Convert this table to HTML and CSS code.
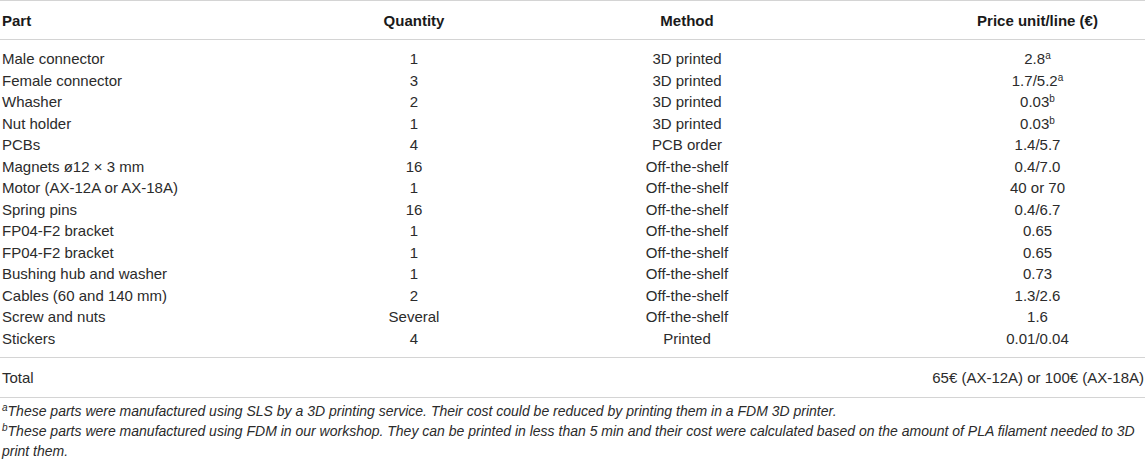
FILE: index.html
```html
<!DOCTYPE html>
<html>
<head>
<meta charset="utf-8">
<link rel="stylesheet" href="styles.css">
</head>
<body>
<table class="parts">
  <colgroup>
    <col class="c-part">
    <col class="c-qty">
    <col class="c-method">
    <col class="c-price">
  </colgroup>
  <thead>
    <tr>
      <th class="left">Part</th>
      <th>Quantity</th>
      <th>Method</th>
      <th class="price">Price unit/line (€)</th>
    </tr>
  </thead>
  <tbody class="items">
    <tr class="first"><td class="left">Male connector</td><td>1</td><td>3D printed</td><td class="price">2.8<sup>a</sup></td></tr>
    <tr><td class="left">Female connector</td><td>3</td><td>3D printed</td><td class="price">1.7/5.2<sup>a</sup></td></tr>
    <tr><td class="left">Whasher</td><td>2</td><td>3D printed</td><td class="price">0.03<sup>b</sup></td></tr>
    <tr><td class="left">Nut holder</td><td>1</td><td>3D printed</td><td class="price">0.03<sup>b</sup></td></tr>
    <tr><td class="left">PCBs</td><td>4</td><td>PCB order</td><td class="price">1.4/5.7</td></tr>
    <tr><td class="left">Magnets ø12 × 3 mm</td><td>16</td><td>Off-the-shelf</td><td class="price">0.4/7.0</td></tr>
    <tr><td class="left">Motor (AX-12A or AX-18A)</td><td>1</td><td>Off-the-shelf</td><td class="price">40 or 70</td></tr>
    <tr><td class="left">Spring pins</td><td>16</td><td>Off-the-shelf</td><td class="price">0.4/6.7</td></tr>
    <tr><td class="left">FP04-F2 bracket</td><td>1</td><td>Off-the-shelf</td><td class="price">0.65</td></tr>
    <tr><td class="left">FP04-F2 bracket</td><td>1</td><td>Off-the-shelf</td><td class="price">0.65</td></tr>
    <tr><td class="left">Bushing hub and washer</td><td>1</td><td>Off-the-shelf</td><td class="price">0.73</td></tr>
    <tr><td class="left">Cables (60 and 140 mm)</td><td>2</td><td>Off-the-shelf</td><td class="price">1.3/2.6</td></tr>
    <tr><td class="left">Screw and nuts</td><td>Several</td><td>Off-the-shelf</td><td class="price">1.6</td></tr>
    <tr class="last"><td class="left">Stickers</td><td>4</td><td>Printed</td><td class="price">0.01/0.04</td></tr>
  </tbody>
  <tbody class="totals">
    <tr><td class="left">Total</td><td></td><td></td><td class="total">65€ (AX-12A) or 100€ (AX-18A)</td></tr>
  </tbody>
</table>
<div class="notes">
  <p><sup>a</sup>These parts were manufactured using SLS by a 3D printing service. Their cost could be reduced by printing them in a FDM 3D printer.</p>
  <p><sup>b</sup>These parts were manufactured using FDM in our workshop. They can be printed in less than 5 min and their cost were calculated based on the amount of PLA filament needed to 3D print them.</p>
</div>
</body>
</html>
```
FILE: styles.css
```css
html, body {
  margin: 0;
  padding: 0;
  background: #ffffff;
}
body {
  font-family: "Liberation Sans", Arial, sans-serif;
  color: #2b2b2b;
  width: 1145px;
}
.parts {
  width: 1145px;
  border-collapse: collapse;
  table-layout: fixed;
  font-size: 15px;
  border-top: 1px solid #d4d4d4;
}
.c-part { width: 330px; }
.c-qty { width: 168px; }
.c-method { width: 378px; }
.c-price { width: 269px; }
.parts th, .parts td {
  padding: 0;
  text-align: center;
  white-space: nowrap;
  vertical-align: top;
}
.parts th {
  font-weight: bold;
  color: #1a1a1a;
  line-height: 21px;
  padding-top: 9px;
  padding-bottom: 8px;
  border-bottom: 1px solid #d4d4d4;
}
.parts td {
  line-height: 21.5px;
}
.parts .left {
  text-align: left;
  padding-left: 2px;
}
.parts .price {
  padding-left: 54px;
}
.items .first td { padding-top: 8px; }
.items .last td { padding-bottom: 8px; border-bottom: 1px solid #d4d4d4; }
.totals td {
  padding-top: 9px;
  padding-bottom: 8px;
  border-bottom: 1px solid #d4d4d4;
}
.parts .total {
  text-align: right;
  padding-right: 1px;
}
sup {
  font-size: 10px;
  line-height: 0;
  vertical-align: 5px;
}
.notes {
  padding: 3px 0 0 2px;
  font-size: 14px;
  font-style: italic;
  line-height: 20px;
  width: 1143px;
}
.notes p {
  margin: 0;
}
.notes sup {
  font-size: 10px;
  line-height: 0;
  vertical-align: 5px;
}
```
